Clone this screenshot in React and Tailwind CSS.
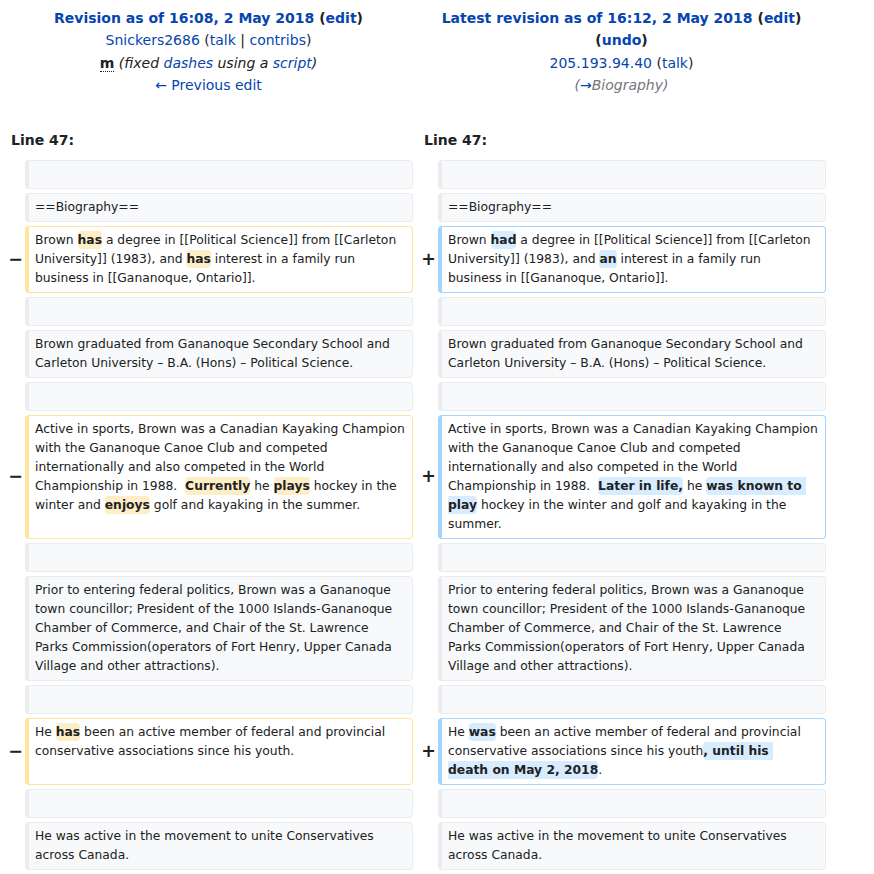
import React from "react";

const D = ({ children }) => (
  <span className="font-bold rounded-[4px] py-[2px] bg-[#feeec8]">{children}</span>
);
const A = ({ children }) => (
  <span className="font-bold rounded-[4px] py-[2px] bg-[#d8ecff]">{children}</span>
);
const L = ({ children }) => <span className="text-[#0645ad]">{children}</span>;

const prior =
  "Prior to entering federal politics, Brown was a Gananoque town councillor; President of the 1000 Islands-Gananoque Chamber of Commerce, and Chair of the St. Lawrence\nParks Commission(operators of Fort Henry, Upper Canada\nVillage and other attractions).";

const rows = [
  { l: ["context", ""], r: ["context", ""] },
  { l: ["context", "==Biography=="], r: ["context", "==Biography=="] },
  {
    l: [
      "del",
      <>
        {"Brown "}<D>has</D>{" a degree in [[Political Science]] from [[Carleton University]] (1983), and "}<D>has</D>{" interest in a family run business in [[Gananoque, Ontario]]."}
      </>,
    ],
    r: [
      "add",
      <>
        {"Brown "}<A>had</A>{" a degree in [[Political Science]] from [[Carleton University]] (1983), and "}<A>an</A>{" interest in a family run\nbusiness in [[Gananoque, Ontario]]."}
      </>,
    ],
  },
  { l: ["context", ""], r: ["context", ""] },
  {
    l: ["context", "Brown graduated from Gananoque Secondary School and Carleton University – B.A. (Hons) – Political Science."],
    r: ["context", "Brown graduated from Gananoque Secondary School and Carleton University – B.A. (Hons) – Political Science."],
  },
  { l: ["context", ""], r: ["context", ""] },
  {
    l: [
      "del",
      <>
        {"Active in sports, Brown was a Canadian Kayaking Champion with the Gananoque Canoe Club and competed internationally and also competed in the World Championship in 1988.  "}<D>Currently</D>{" he "}<D>plays</D>{" hockey in the winter and "}<D>enjoys</D>{" golf and kayaking in the summer."}
      </>,
    ],
    r: [
      "add",
      <>
        {"Active in sports, Brown was a Canadian Kayaking Champion with the Gananoque Canoe Club and competed internationally and also competed in the World Championship in 1988.  "}<A>Later in life,</A>{" he "}<A>was known to play</A>{" hockey in the winter and golf and kayaking in the summer."}
      </>,
    ],
  },
  { l: ["context", ""], r: ["context", ""] },
  {
    l: ["context", prior],
    r: ["context", prior],
  },
  { l: ["context", ""], r: ["context", ""] },
  {
    l: [
      "del",
      <>
        {"He "}<D>has</D>{" been an active member of federal and provincial conservative associations since his youth."}
      </>,
    ],
    r: [
      "add",
      <>
        {"He "}<A>was</A>{" been an active member of federal and provincial conservative associations since his youth"}<A>{", until his \ndeath on May 2, 2018"}</A>{"."}
      </>,
    ],
  },
  { l: ["context", ""], r: ["context", ""] },
  {
    l: ["context", "He was active in the movement to unite Conservatives across Canada."],
    r: ["context", "He was active in the movement to unite Conservatives across Canada."],
  },
];

function Marker({ type }) {
  return (
    <div className="flex items-center justify-end text-[17.5px] font-bold leading-[1.2] text-[#202122] translate-x-[2px]">
      {type === "del" ? "−" : type === "add" ? "+" : ""}
    </div>
  );
}

function Cell({ type, content }) {
  const cls =
    type === "context"
      ? "bg-[#f8f9fa] border-[#eaecf0]"
      : type === "del"
      ? "bg-white border-[#ffe49c]"
      : "bg-white border-[#a3d3ff]";
  return (
    <div
      className={`${cls} border-solid border-t border-r border-b border-l-4 rounded-[4px] px-[6px] py-[4px] text-[12.32px] leading-[19px] text-[#202122] whitespace-pre-wrap break-words min-h-[29px]`}
    >
      {content}
    </div>
  );
}

export default function App() {
  return (
    <div className="bg-white w-[874px] h-[874px] overflow-hidden" style={{ fontFamily: "'DejaVu Sans', sans-serif" }}>
      <div className="w-[830px] grid grid-cols-[17px_388px_17px_388px] gap-[4px] p-[4px] text-[#202122]">
        <div className="col-span-2 text-center text-[14px] leading-[22.4px] pt-[3px] pb-[23.6px]">
          <div className="font-bold">
            <L>Revision as of 16:08, 2 May 2018</L> (<L>edit</L>)
          </div>
          <div>
            <L>Snickers2686</L> (<L>talk</L> | <L>contribs</L>)
          </div>
          <div>
            <span className="font-bold border-b border-dotted border-[#202122]">m</span>{" "}
            <span className="italic">
              (fixed <L>dashes</L> using a <L>script</L>)
            </span>
          </div>
          <div>
            <L>← Previous edit</L>
          </div>
        </div>
        <div className="col-span-2 text-center text-[14px] leading-[22.4px] pt-[3px] pb-[23.6px]">
          <div className="font-bold">
            <L>Latest revision as of 16:12, 2 May 2018</L> (<L>edit</L>)
          </div>
          <div className="font-bold">
            (<L>undo</L>)
          </div>
          <div>
            <L>205.193.94.40</L> (<L>talk</L>)
          </div>
          <div className="italic text-[#72777d]">
            (<L>→</L>Biography)
          </div>
        </div>

        <div className="col-span-2 font-bold text-[14px] leading-[22.4px] px-[7px] py-[4.6px]">Line 47:</div>
        <div className="col-span-2 font-bold text-[14px] leading-[22.4px] px-[7px] py-[4.6px]">Line 47:</div>

        {rows.map((row, i) => (
          <React.Fragment key={i}>
            <Marker type={row.l[0]} />
            <Cell type={row.l[0]} content={row.l[1]} />
            <Marker type={row.r[0]} />
            <Cell type={row.r[0]} content={row.r[1]} />
          </React.Fragment>
        ))}
      </div>
    </div>
  );
}
